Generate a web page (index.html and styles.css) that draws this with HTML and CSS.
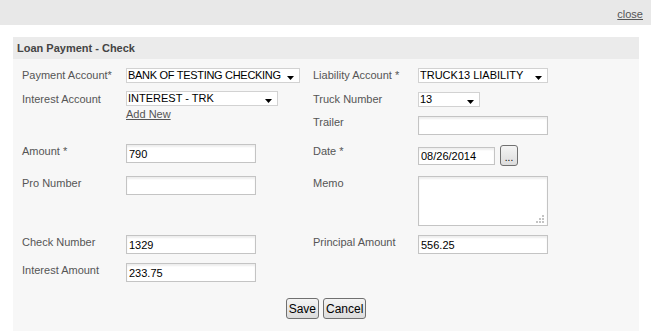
FILE: index.html
```html
<!DOCTYPE html>
<html>
<head>
<meta charset="utf-8">
<title>Loan Payment - Check</title>
<link rel="stylesheet" href="styles.css">
</head>
<body>
<div class="topbar"><a class="close" href="#">close</a></div>
<div class="panel">
  <div class="panel-head">Loan Payment - Check</div>
  <div class="panel-body">
    <div class="form-grid">
      <label class="lbl lbl-sel">Payment Account*</label>
      <div class="cell"><select class="sel sel-payment"><option>BANK OF TESTING CHECKING</option></select></div>
      <label class="lbl lbl-sel">Liability Account *</label>
      <div class="cell"><select class="sel sel-liab"><option>TRUCK13 LIABILITY</option></select></div>

      <label class="lbl lbl-sel">Interest Account</label>
      <div class="cell cell-stack span2">
        <select class="sel sel-interest"><option>INTEREST - TRK</option></select>
        <a class="addnew" href="#">Add New</a>
      </div>
      <label class="lbl lbl-sel">Truck Number</label>
      <div class="cell"><select class="sel sel-truck"><option>13</option></select></div>

      <label class="lbl lbl-trailer">Trailer</label>
      <div class="cell"><input class="txt" type="text" value=""></div>

      <label class="lbl">Amount *</label>
      <div class="cell"><input class="txt" type="text" value="790"></div>
      <label class="lbl">Date *</label>
      <div class="cell cell-date">
        <input class="txt txt-date" type="text" value="08/26/2014">
        <button class="dots" type="button">...</button>
      </div>

      <label class="lbl">Pro Number</label>
      <div class="cell"><input class="txt" type="text" value=""></div>
      <label class="lbl">Memo</label>
      <div class="cell"><textarea class="memo"></textarea></div>

      <label class="lbl">Check Number</label>
      <div class="cell"><input class="txt" type="text" value="1329"></div>
      <label class="lbl">Principal Amount</label>
      <div class="cell"><input class="txt" type="text" value="556.25"></div>

      <label class="lbl">Interest Amount</label>
      <div class="cell"><input class="txt" type="text" value="233.75"></div>
    </div>
    <div class="actions">
      <button class="btn" type="button">Save</button>
      <button class="btn" type="button">Cancel</button>
    </div>
  </div>
</div>
</body>
</html>
```

FILE: styles.css
```css
* { box-sizing: border-box; }
html, body { margin: 0; padding: 0; }
body {
  background: #fff;
  font-family: "Liberation Sans", Arial, sans-serif;
  font-size: 11px;
  color: #555;
}
.topbar {
  height: 25px;
  background: #e8e8e8;
  display: flex;
  justify-content: flex-end;
  align-items: flex-start;
  padding-right: 8px;
}
.close {
  margin-top: 7px;
  line-height: 14px;
  color: #555;
  font-size: 11px;
}
.panel {
  margin: 12px 12px 0 13px;
}
.panel-head {
  height: 22px;
  line-height: 22px;
  background: #ebebeb;
  padding-left: 4px;
  font-weight: bold;
  color: #444;
}
.panel-body {
  background: #f7f7f7;
  padding: 8px 0 20px 9px;
}
.form-grid {
  display: grid;
  grid-template-columns: 104px 187px 105px 1fr;
  grid-template-rows: 24px 25px 28px 32px 59px 28px 19px;
  align-items: start;
}
.lbl {
  line-height: 13px;
  padding-top: 1px;
  color: #555;
}
.lbl-sel { padding-top: 2px; }
.lbl-trailer { grid-column: 3; padding-top: 0; }
.cell { display: flex; align-items: flex-start; }
.cell-stack { flex-direction: column; }
.span2 { grid-row: span 2; }
.sel {
  appearance: none;
  -webkit-appearance: none;
  height: 15px;
  border: 1px solid #d2d2d2;
  border-radius: 0;
  background-color: #fff;
  background-image: url("data:image/svg+xml,%3Csvg xmlns='http://www.w3.org/2000/svg' width='7' height='4'%3E%3Cpath d='M0 0h7L3.5 4z' fill='%23000'/%3E%3C/svg%3E");
  background-repeat: no-repeat;
  background-position: right 5px top 7px;
  font-family: "Liberation Sans", Arial, sans-serif;
  font-size: 11px;
  line-height: 13px;
  color: #000;
  padding: 0 12px 0 1px;
  margin: 0;
}
.sel-payment { width: 174px; margin-top: 1px; letter-spacing: -0.3px; }
.sel-liab { width: 130px; margin-top: 1px; }
.sel-interest { width: 152px; }
.sel-truck { width: 62px; margin-top: 1px; }
.addnew {
  margin-top: 2px;
  color: #555;
  line-height: 13px;
}
.txt {
  width: 130px;
  height: 19px;
  border: 1px solid #c4c4c4;
  background: #fff;
  box-shadow: inset 0 2px 2px rgba(0, 0, 0, 0.07);
  font-family: "Liberation Sans", Arial, sans-serif;
  font-size: 11px;
  color: #000;
  padding: 1px 2px 0;
  margin: 0;
}
.cell-date { align-items: center; padding-top: 1px; gap: 5px; }
.txt-date { width: 77px; height: 18px; }
.dots {
  width: 18px;
  height: 21px;
  border: 1px solid #707070;
  border-radius: 3px;
  background: linear-gradient(#f4f4f4, #dcdcdc);
  font-family: "Liberation Sans", Arial, sans-serif;
  font-size: 10px;
  color: #000;
  padding: 3px 0 0;
  margin: 0;
}
.memo {
  width: 130px;
  height: 50px;
  border: 1px solid #c4c4c4;
  box-shadow: inset 0 2px 2px rgba(0, 0, 0, 0.07);
  resize: none;
  margin: 0;
  background-color: #fff;
  background-image: url("data:image/svg+xml,%3Csvg xmlns='http://www.w3.org/2000/svg' width='9' height='9'%3E%3Cg fill='%23c4c4c4'%3E%3Crect x='6' y='0' width='2' height='2'/%3E%3Crect x='3' y='3' width='2' height='2'/%3E%3Crect x='6' y='3' width='2' height='2'/%3E%3Crect x='0' y='6' width='2' height='2'/%3E%3Crect x='3' y='6' width='2' height='2'/%3E%3Crect x='6' y='6' width='2' height='2'/%3E%3C/g%3E%3C/svg%3E");
  background-repeat: no-repeat;
  background-position: right 2px bottom 1px;
}
.actions {
  display: flex;
  justify-content: center;
  gap: 4px;
  margin-top: 16px;
  padding-right: 9px;
}
.btn {
  height: 21px;
  border: 1px solid #707070;
  border-radius: 3px;
  background: linear-gradient(#f4f4f4, #dcdcdc);
  font-family: "Liberation Sans", Arial, sans-serif;
  font-size: 12px;
  color: #000;
  padding: 0 2px;
  margin: 0;
}
```
